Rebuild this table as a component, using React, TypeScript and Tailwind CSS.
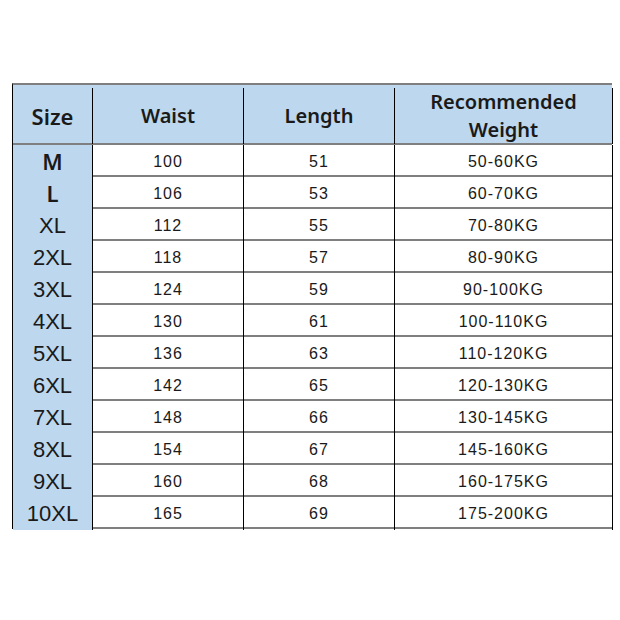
import React from 'react'

const rows: [string, string, string, string][] = [
  ['M', '100', '51', '50-60KG'],
  ['L', '106', '53', '60-70KG'],
  ['XL', '112', '55', '70-80KG'],
  ['2XL', '118', '57', '80-90KG'],
  ['3XL', '124', '59', '90-100KG'],
  ['4XL', '130', '61', '100-110KG'],
  ['5XL', '136', '63', '110-120KG'],
  ['6XL', '142', '65', '120-130KG'],
  ['7XL', '148', '66', '130-145KG'],
  ['8XL', '154', '67', '145-160KG'],
  ['9XL', '160', '68', '160-175KG'],
  ['10XL', '165', '69', '175-200KG']
]

const cols = 'grid grid-cols-[80px_151px_151px_218px] border-b-2 border-[#7f7f7f]'

export default function App() {
  return (
    <div className="w-[620px] h-[620px] bg-white pt-[83px] pl-[12px] text-[#1a1a1a]">
      <div className="w-[600px] border-t-2 border-l border-t-[#7f7f7f] border-l-black">
        {/* header */}
        <div className={`${cols} h-[60px] pt-[3px] bg-[#bdd7ee] font-['Noto_Sans',sans-serif] font-semibold text-[20px]`}>
          <div className="flex items-center justify-center border-r border-black text-[22px]">Size</div>
          <div className="flex items-center justify-center border-r border-black">Waist</div>
          <div className="flex items-center justify-center border-r border-black">Length</div>
          <div className="flex flex-col items-center justify-center border-r border-black leading-[28px]">
            <span>Recommended</span>
            <span>Weight</span>
          </div>
        </div>

        {rows.map(([size, waist, length, weight]) => (
          <div key={size} className={`${cols} h-[32px] font-['Liberation_Sans',Arial,sans-serif]`}>
            <div
              className={`flex items-center justify-center border-r border-black bg-[#bdd7ee] text-[22px] ${
                size === 'M' || size === 'L' ? "font-['Noto_Sans',sans-serif] font-semibold" : ''
              }`}
            >
              {size}
            </div>
            <div className="flex items-center justify-center border-r border-black text-[16px] tracking-[1px]">{waist}</div>
            <div className="flex items-center justify-center border-r border-black text-[16px] tracking-[1px]">{length}</div>
            <div className="flex items-center justify-center border-r border-black text-[16px] tracking-[1px]">{weight}</div>
          </div>
        ))}
      </div>
    </div>
  )
}
